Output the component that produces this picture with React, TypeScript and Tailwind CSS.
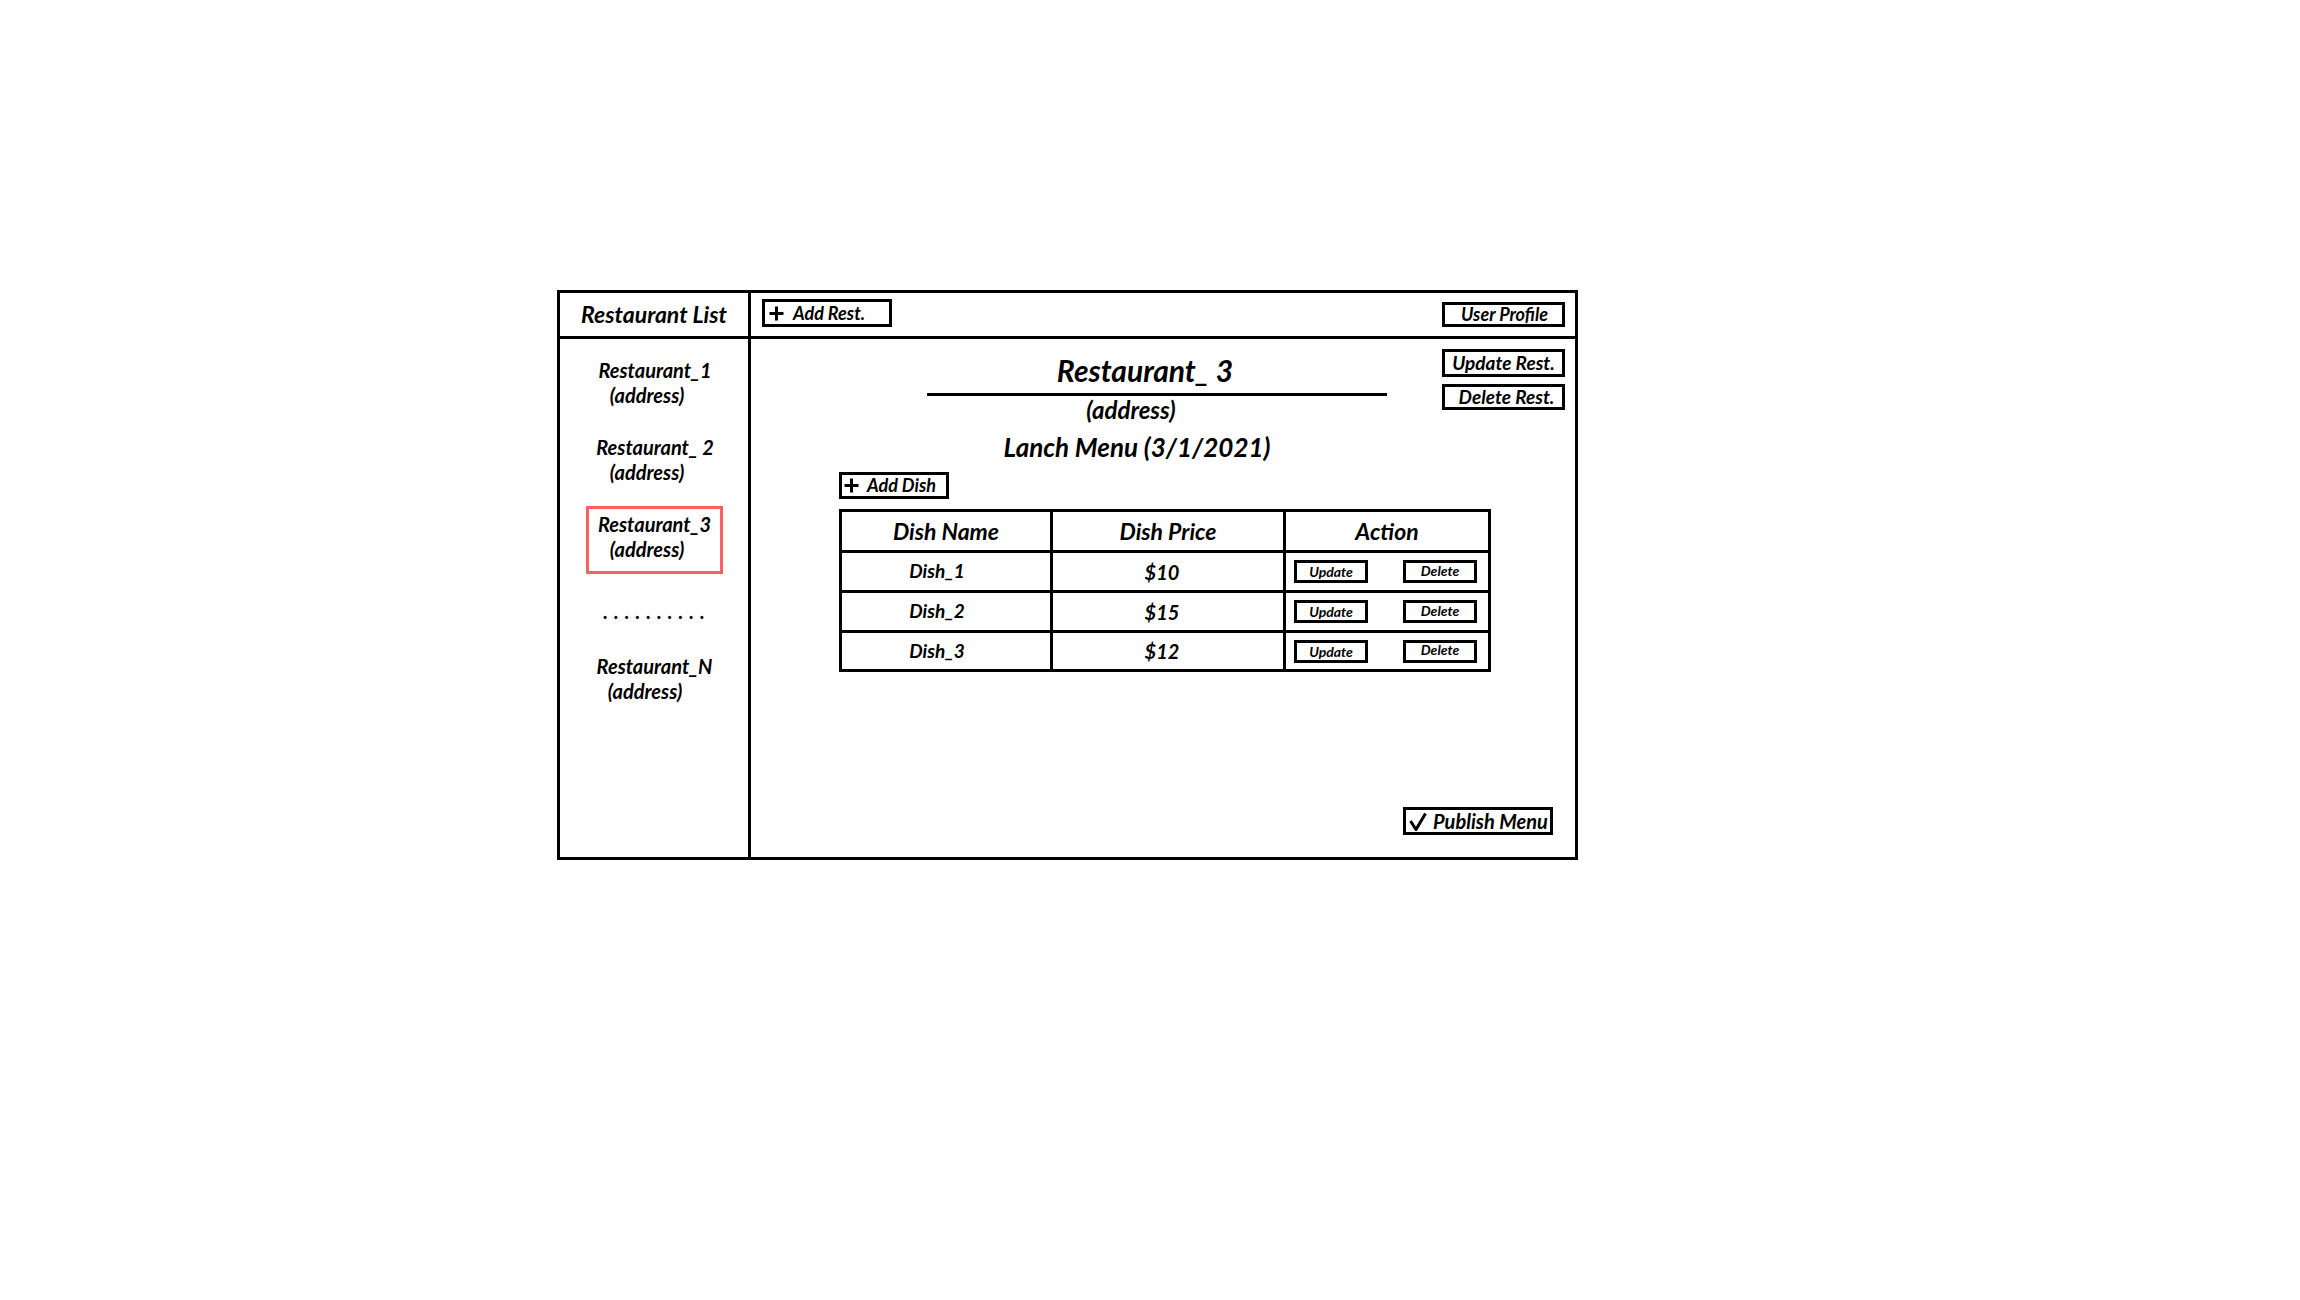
import React from 'react';

const font = "font-['Lato',sans-serif] font-bold italic text-black";

const PlusIcon: React.FC = () => (
  <svg width="15" height="15" viewBox="0 0 15 15" className="shrink-0">
    <path d="M7.5 0.5 V14.5 M0.5 7.5 H14.5" stroke="black" strokeWidth="3" fill="none" />
  </svg>
);

const CheckIcon: React.FC = () => (
  <svg width="18" height="19" viewBox="0 0 18 19" className="shrink-0">
    <path d="M1.5 9 L7 17.5 L16.5 1.5" stroke="black" strokeWidth="3" fill="none" strokeLinejoin="miter" />
  </svg>
);

const restaurants = [
  { name: 'Restaurant_1' },
  { name: 'Restaurant_ 2' },
];

const dishes = [
  { name: 'Dish_1', price: '$10' },
  { name: 'Dish_2', price: '$15' },
  { name: 'Dish_3', price: '$12' },
];

/**
 * Wireframe of the restaurant admin page
 */
export default function App() {
  return (
    <div className={`min-h-[1300px] w-[2300px] bg-white pt-[290px] pl-[557px] ${font}`}>
      <div className="w-[1021px] h-[570px] border-[3px] border-black flex flex-col">
        {/* Header row */}
        <div className="flex h-[46px] border-b-[3px] border-black">
          <div className="w-[191px] border-r-[3px] border-black flex items-center justify-center text-[23px]">
            Restaurant List
          </div>
          <div className="flex-1 flex items-center pl-[11px] pr-[10px]">
            <button className="w-[130px] h-[28px] -mt-[3px] border-[3px] border-black flex items-center pl-[4px] gap-[9px] text-[18px]">
              <PlusIcon />
              <span>Add Rest.</span>
            </button>
            <button className="ml-auto w-[123px] h-[25px] border-[3px] border-black flex items-center justify-center pl-[2px] text-[18px]">
              User Profile
            </button>
          </div>
        </div>

        {/* Body */}
        <div className="flex flex-1">
          {/* Restaurant list */}
          <div className="w-[191px] border-r-[3px] border-black flex flex-col items-center pt-[19px] text-[20px] leading-[25px]">
            {restaurants.map((r, i) => (
              <div key={r.name} className={`flex flex-col items-center ${i > 0 ? 'mt-[27px]' : ''}`}>
                <span className="pl-[2px]">{r.name}</span>
                <span className="pr-[14px]">(address)</span>
              </div>
            ))}
            <div className="mt-[21px] w-[137px] h-[68px] border-[3px] border-[#ff5f5f] flex flex-col items-center pt-[3px]">
              <span className="pl-[1px]">Restaurant_3</span>
              <span className="pr-[14px]">(address)</span>
            </div>
            <div className="mt-[25px] tracking-[6px] pl-[6px]">..........</div>
            <div className="mt-[30px] flex flex-col items-center">
              <span className="pl-[1px]">Restaurant_N</span>
              <span className="pr-[18px]">(address)</span>
            </div>
          </div>

          {/* Main panel */}
          <div className="flex-1 flex flex-col">
            <div className="flex items-start">
              <div className="ml-[176px] mt-[13px] w-[460px] flex flex-col">
                <div className="text-center pr-[24px] text-[30px] leading-[36px]">Restaurant_ 3</div>
                <div className="mt-[5px] h-[3px] bg-black" />
                <div className="text-center pr-[52px] text-[24px] leading-[28px]">(address)</div>
                <div className="mt-[8px] text-center pr-[40px] text-[26px] leading-[30px]">Lanch Menu (3/1/2021)</div>
              </div>
              <div className="ml-auto mr-[10px] mt-[10px] flex flex-col gap-[7px]">
                <button className="w-[123px] h-[28px] border-[3px] border-black flex items-center justify-center text-[19px]">
                  Update Rest.
                </button>
                <button className="w-[123px] h-[26px] border-[3px] border-black flex items-center justify-center pl-[6px] text-[19px]">
                  Delete Rest.
                </button>
              </div>
            </div>

            <div className="ml-[88px] mt-[10px]">
              <button className="w-[110px] h-[27px] border-[3px] border-black flex items-center pl-[2px] gap-[8px] text-[18px]">
                <PlusIcon />
                <span>Add Dish</span>
              </button>

              {/* Dish table */}
              <div className="mt-[10px] w-[652px] border-[3px] border-black text-[19px]">
                <div className="flex h-[41px] border-b-[3px] border-black text-[23px]">
                  <div className="w-[211px] border-r-[3px] border-black flex items-center justify-center">Dish Name</div>
                  <div className="w-[233px] border-r-[3px] border-black flex items-center justify-center">Dish Price</div>
                  <div className="flex-1 flex items-center justify-center">Action</div>
                </div>
                {dishes.map((d, i) => (
                  <div key={d.name} className={`flex ${i < dishes.length - 1 ? 'h-[40px] border-b-[3px] border-black' : 'h-[36px]'}`}>
                    <div className="w-[211px] border-r-[3px] border-black flex items-center justify-center pr-[18px]">{d.name}</div>
                    <div className="w-[233px] border-r-[3px] border-black flex items-center justify-center pr-[12px] text-[20px]">{d.price}</div>
                    <div className="flex-1 flex items-center justify-between pl-[8px] pr-[11px] text-[14px]">
                      <span className="w-[74px] h-[23px] border-[3px] border-black flex items-center justify-center">Update</span>
                      <span className="w-[74px] h-[23px] border-[3px] border-black flex items-center justify-center pb-[3px]">Delete</span>
                    </div>
                  </div>
                ))}
              </div>
            </div>

            <button className="mt-auto self-end mr-[22px] mb-[22px] w-[150px] h-[28px] border-[3px] border-black flex items-center pl-[3px] gap-[6px] text-[20px]">
              <CheckIcon />
              <span>Publish Menu</span>
            </button>
          </div>
        </div>
      </div>
    </div>
  );
}
